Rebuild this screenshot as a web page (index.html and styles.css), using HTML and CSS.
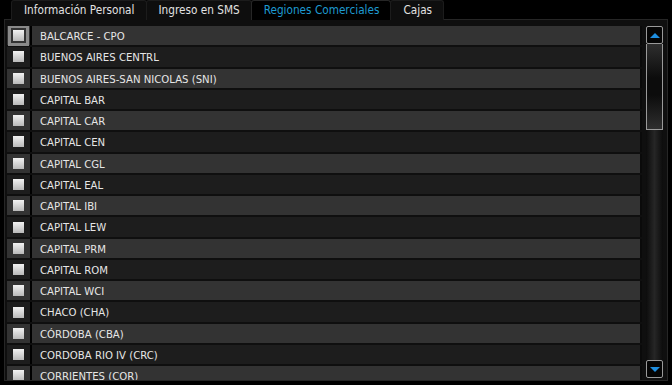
FILE: index.html
```html
<!DOCTYPE html>
<html lang="es">
<head>
    <meta charset="UTF-8">
    <title>Regiones Comerciales</title>
    <link rel="stylesheet" href="styles.css">
</head>
<body>
    <div class="tabs">
        <div class="tab">Información Personal</div>
        <div class="tab">Ingreso en SMS</div>
        <div class="tab active">Regiones Comerciales</div>
        <div class="tab">Cajas</div>
    </div>
    <div class="panel">
        <div class="list">
            <div class="row"><div class="check focus"><span class="box"></span></div><div class="label">BALCARCE - CPO</div></div>
            <div class="row"><div class="check"><span class="box"></span></div><div class="label">BUENOS AIRES CENTRL</div></div>
            <div class="row"><div class="check"><span class="box"></span></div><div class="label">BUENOS AIRES-SAN NICOLAS (SNI)</div></div>
            <div class="row"><div class="check"><span class="box"></span></div><div class="label">CAPITAL BAR</div></div>
            <div class="row"><div class="check"><span class="box"></span></div><div class="label">CAPITAL CAR</div></div>
            <div class="row"><div class="check"><span class="box"></span></div><div class="label">CAPITAL CEN</div></div>
            <div class="row"><div class="check"><span class="box"></span></div><div class="label">CAPITAL CGL</div></div>
            <div class="row"><div class="check"><span class="box"></span></div><div class="label">CAPITAL EAL</div></div>
            <div class="row"><div class="check"><span class="box"></span></div><div class="label">CAPITAL IBI</div></div>
            <div class="row"><div class="check"><span class="box"></span></div><div class="label">CAPITAL LEW</div></div>
            <div class="row"><div class="check"><span class="box"></span></div><div class="label">CAPITAL PRM</div></div>
            <div class="row"><div class="check"><span class="box"></span></div><div class="label">CAPITAL ROM</div></div>
            <div class="row"><div class="check"><span class="box"></span></div><div class="label">CAPITAL WCI</div></div>
            <div class="row"><div class="check"><span class="box"></span></div><div class="label">CHACO (CHA)</div></div>
            <div class="row"><div class="check"><span class="box"></span></div><div class="label">CÓRDOBA (CBA)</div></div>
            <div class="row"><div class="check"><span class="box"></span></div><div class="label">CORDOBA RIO IV (CRC)</div></div>
            <div class="row"><div class="check"><span class="box"></span></div><div class="label">CORRIENTES (COR)</div></div>
        </div>
        <div class="scrollbar">
            <div class="sb-btn"><span class="arrow up"></span></div>
            <div class="sb-thumb"></div>
            <div class="sb-track"></div>
            <div class="sb-btn"><span class="arrow down"></span></div>
        </div>
    </div>
</body>
</html>
```

FILE: styles.css
```css
body {
    margin: 0;
    background-color: #000;
    font-family: Tahoma, "DejaVu Sans Condensed", "Liberation Sans", sans-serif;
    font-size: 11.25px;
    color: #e6e6e6;
    width: 672px;
    height: 385px;
    overflow: hidden;
}
.tabs {
    display: flex;
    padding-left: 11px;
    height: 19px;
}
.tab {
    background-color: #0e0e0e;
    border: 1px solid #1c1c1c;
    border-bottom: none;
    border-radius: 3px 3px 0 0;
    padding: 2px 11px 0 12px;
    font-size: 11.7px;
    color: #e2e2e2;
    height: 17px;
    margin-right: -1px;
}
.tab.active {
    background-color: #000;
    color: #1e9ad0;
    border-color: #262626;
}
.panel {
    display: flex;
    margin: 0 4px;
    height: 362px;
    border: 1px solid #262626;
    background-color: #0f0f0f;
    padding: 6px 4px 0 2px;
    box-sizing: border-box;
    gap: 4px;
}
.list {
    flex: 1;
    overflow: hidden;
    height: 354px;
}
.row {
    display: flex;
    height: 19.27px;
    margin-bottom: 2px;
}
.row:nth-child(odd) .check,
.row:nth-child(odd) .label {
    background-color: #333;
}
.row:nth-child(even) .check,
.row:nth-child(even) .label {
    background-color: #1d1d1d;
}
.check {
    width: 25px;
    display: flex;
    align-items: center;
    justify-content: center;
    border-right: 2px solid #000;
    box-sizing: border-box;
}
.check.focus .box {
    outline: 3px solid #8a8a8a;
    outline-offset: 2px;
}
.box {
    width: 11px;
    height: 11px;
    background: linear-gradient(#f2f2f2, #b9b9b9);
}
.label {
    flex: 1;
    padding: 2px 0 0 8px;
    line-height: 17px;
    border-right: 2px solid #0a0a0a;
    white-space: nowrap;
}
.scrollbar {
    width: 17px;
    display: flex;
    flex-direction: column;
    height: 352px;
}
.sb-btn {
    height: 16px;
    border: 1px solid #9a9a9a;
    border-radius: 2px;
    background-color: #050505;
    display: flex;
    align-items: center;
    justify-content: center;
}
.arrow {
    width: 0;
    height: 0;
    border-left: 5px solid transparent;
    border-right: 5px solid transparent;
}
.arrow.up {
    border-bottom: 5px solid #1e8ee0;
}
.arrow.down {
    border-top: 5px solid #1e8ee0;
}
.sb-thumb {
    height: 85px;
    border: 1px solid #9a9a9a;
    border-top: none;
    background: linear-gradient(#2e2e2e, #0c0c0c 40%, #0c0c0c 60%, #2e2e2e);
}
.sb-track {
    flex: 1;
    background: linear-gradient(90deg, #0c0c0c, #262626 50%, #0c0c0c);
}
```
